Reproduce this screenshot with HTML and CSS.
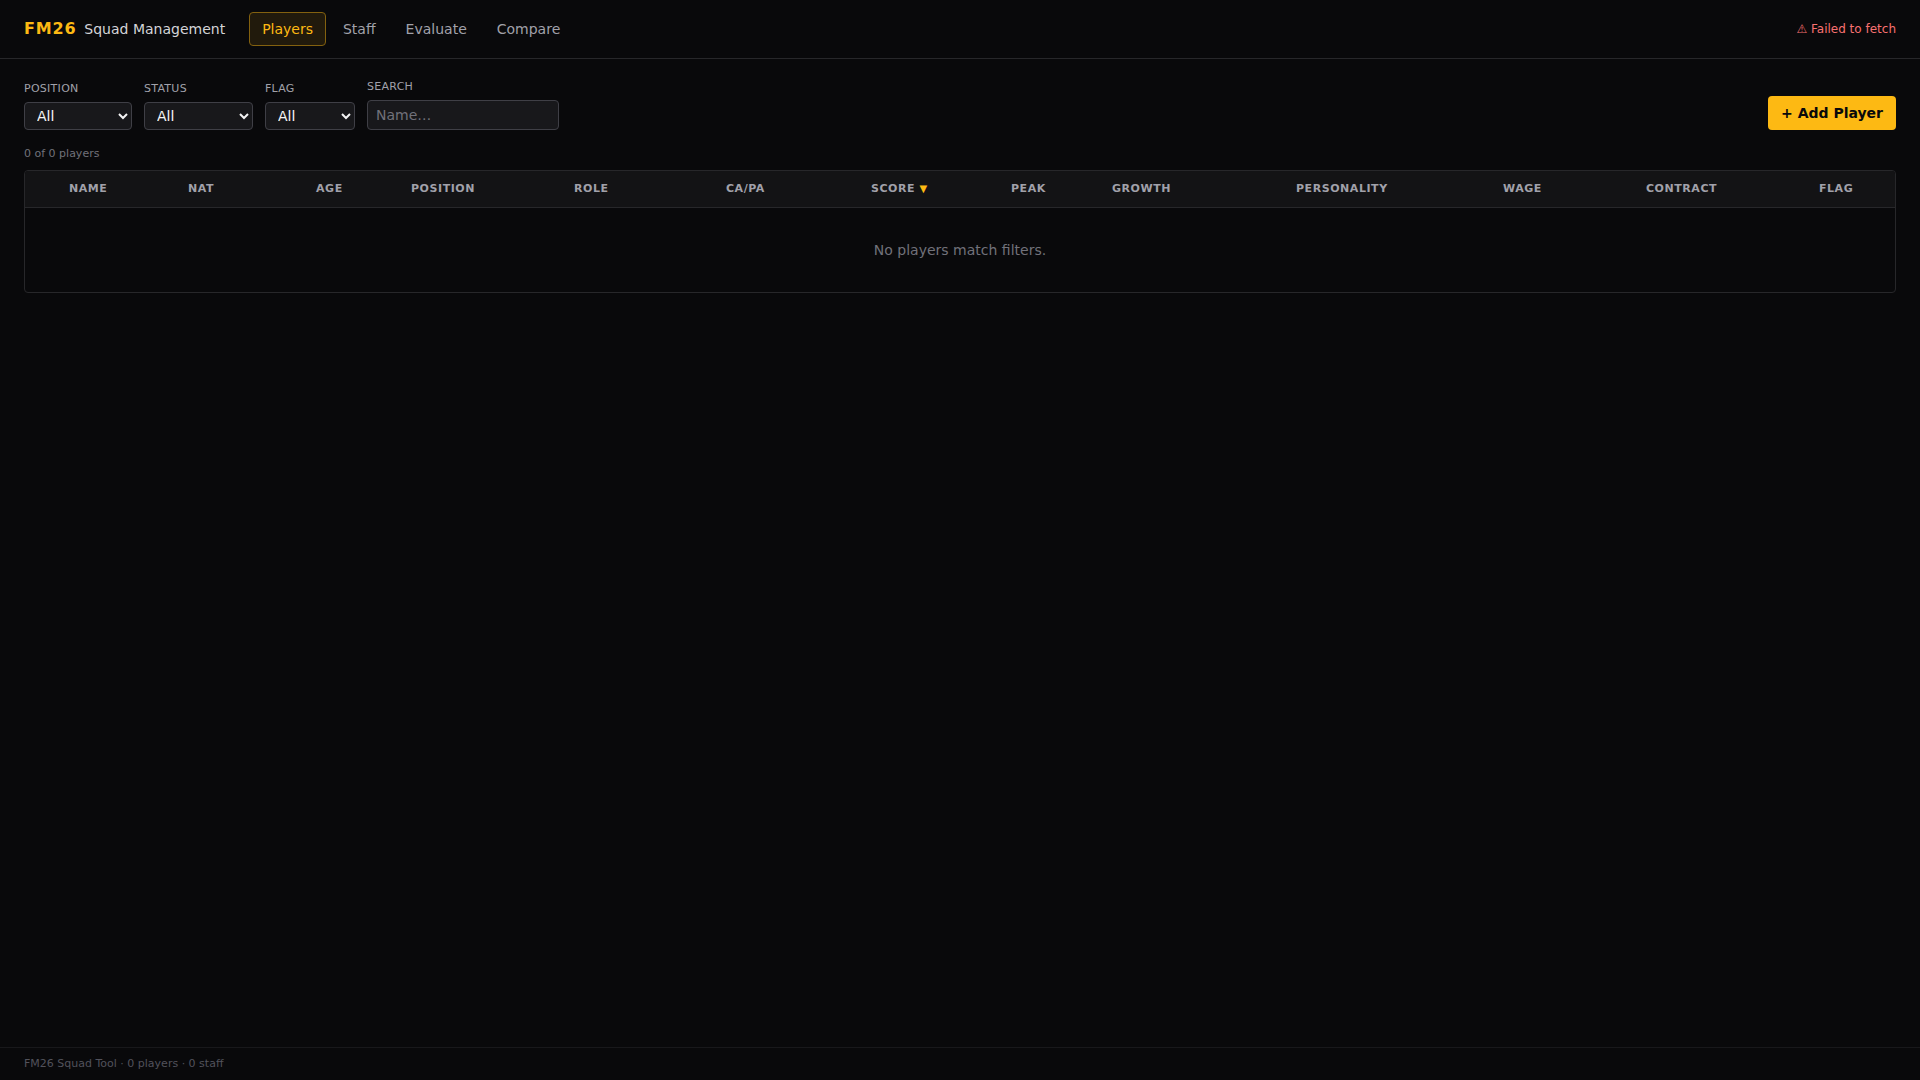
FILE: index.html
```html
<!DOCTYPE html>
<html lang="en">
<head>
  <meta charset="utf-8">
  <meta name="viewport" content="width=device-width, initial-scale=1">
  <title>FM26 Squad Management</title>
  <link rel="stylesheet" href="styles.css">
</head>
<body>
  <header class="topbar">
    <div class="brand">
      <span class="brand-mark">FM26</span>
      <span class="brand-name">Squad Management</span>
    </div>
    <nav class="nav">
      <button type="button" class="tab tab-active" aria-current="page">Players</button>
      <button type="button" class="tab">Staff</button>
      <button type="button" class="tab">Evaluate</button>
      <button type="button" class="tab">Compare</button>
    </nav>
    <div class="error" role="status">⚠ Failed to fetch</div>
  </header>

  <main class="content">
    <div class="filters">
      <div class="field">
        <label class="label" for="position">Position</label>
        <select class="control select-position" id="position"><option>All</option></select>
      </div>
      <div class="field">
        <label class="label" for="status">Status</label>
        <select class="control select-status" id="status"><option>All</option></select>
      </div>
      <div class="field">
        <label class="label" for="flag">Flag</label>
        <select class="control select-flag" id="flag"><option>All</option></select>
      </div>
      <div class="field">
        <label class="label" for="search">Search</label>
        <input class="control search" id="search" type="text" placeholder="Name…">
      </div>
      <button type="button" class="add">+ Add Player</button>
    </div>

    <p class="count">0 of 0 players</p>

    <div class="table-wrap">
      <table class="table">
        <colgroup>
          <col class="col-star"><col class="col-name"><col class="col-nat"><col class="col-age">
          <col class="col-position"><col class="col-role"><col class="col-ability"><col class="col-score">
          <col class="col-peak"><col class="col-growth"><col class="col-personality"><col class="col-wage">
          <col class="col-contract"><col class="col-flag">
        </colgroup>
        <thead>
          <tr>
            <td></td>
            <th scope="col">Name</th>
            <th scope="col">Nat</th>
            <th scope="col">Age</th>
            <th scope="col">Position</th>
            <th scope="col">Role</th>
            <th scope="col">CA/PA</th>
            <th scope="col" aria-sort="descending">Score <span class="sort">▼</span></th>
            <th scope="col">Peak</th>
            <th scope="col">Growth</th>
            <th scope="col">Personality</th>
            <th scope="col">Wage</th>
            <th scope="col">Contract</th>
            <th scope="col">Flag</th>
          </tr>
        </thead>
        <tbody>
          <tr><td class="empty" colspan="14">No players match filters.</td></tr>
        </tbody>
      </table>
    </div>
  </main>

  <footer class="footer">FM26 Squad Tool · 0 players · 0 staff</footer>
</body>
</html>
```
FILE: styles.css
```css
*,
*::before,
*::after {
  box-sizing: border-box;
}

body {
  margin: 0;
  min-height: 100vh;
  display: flex;
  flex-direction: column;
  background: #09090b;
  color: #f4f4f5;
  font-family: "DejaVu Sans", sans-serif;
  font-size: 14px;
  line-height: 20px;
}

button,
input,
select {
  font: inherit;
  color: inherit;
}

.topbar {
  display: flex;
  align-items: center;
  gap: 24px;
  padding: 12px 24px;
  border-bottom: 1px solid #27272a;
}

.brand {
  display: flex;
  align-items: baseline;
  gap: 8px;
}

.brand-mark {
  color: #fdb913;
  font-size: 16px;
  font-weight: 700;
  letter-spacing: 0.05em;
}

.brand-name {
  color: #d4d4d8;
}

.nav {
  display: flex;
  gap: 4px;
}

.tab {
  padding: 6px 12px;
  border: 1px solid transparent;
  border-radius: 4px;
  background: transparent;
  color: #a1a1aa;
}

.tab-active {
  border-color: #83610f;
  background: #211a0c;
  color: #fdb913;
}

.error {
  margin-left: auto;
  color: #f87171;
  font-size: 12px;
}

.content {
  flex: 1;
  padding: 20px 24px;
}

.filters {
  display: flex;
  flex-wrap: wrap;
  align-items: flex-end;
  gap: 12px;
}

.field {
  display: flex;
  flex-direction: column;
  gap: 6px;
}

.label {
  color: #a1a1aa;
  font-size: 11px;
  line-height: 15px;
  letter-spacing: 0.025em;
  text-transform: uppercase;
}

.control {
  border: 1px solid #3f3f46;
  border-radius: 4px;
  background: #18181b;
  padding: 4px 8px;
}

.select-position {
  width: 108px;
  height: 28px;
}

.select-status {
  width: 109px;
  height: 28px;
}

.select-flag {
  width: 90px;
  height: 28px;
}

.search {
  width: 192px;
  height: 30px;
}

.search::placeholder {
  color: #71717a;
}

.add {
  margin-left: auto;
  padding: 7px 13px;
  border: 0;
  border-radius: 4px;
  background: #fdb913;
  color: #09090b;
  font-weight: 700;
}

.count {
  margin: 16px 0 8px;
  color: #71717a;
  font-size: 11px;
  line-height: 16px;
}

.table-wrap {
  overflow-x: auto;
  border: 1px solid #27272a;
  border-radius: 4px;
}

.table {
  width: 100%;
  table-layout: fixed;
  border-collapse: separate;
  border-spacing: 0;
}

.col-star { width: 32px; }
.col-name { width: 119px; }
.col-nat { width: 128px; }
.col-age { width: 95px; }
.col-position { width: 163px; }
.col-role { width: 152px; }
.col-ability { width: 145px; }
.col-score { width: 140px; }
.col-peak { width: 101px; }
.col-growth { width: 184px; }
.col-personality { width: 207px; }
.col-wage { width: 143px; }
.col-contract { width: 173px; }
.col-flag { width: 88px; }

.table thead {
  background: #131315;
}

.table thead td,
.table th {
  height: 37px;
  padding: 8px 12px;
  border-bottom: 1px solid #27272a;
  color: #a1a1aa;
  font-size: 11px;
  font-weight: 700;
  letter-spacing: 0.05em;
  text-align: left;
  text-transform: uppercase;
  white-space: nowrap;
}

.sort {
  color: #fdb913;
  font-size: 10px;
}

.empty {
  padding: 32px 12px;
  color: #71717a;
  text-align: center;
}

.footer {
  padding: 8px 24px;
  border-top: 1px solid #18181b;
  color: #52525b;
  font-size: 11px;
  line-height: 16px;
}
```
